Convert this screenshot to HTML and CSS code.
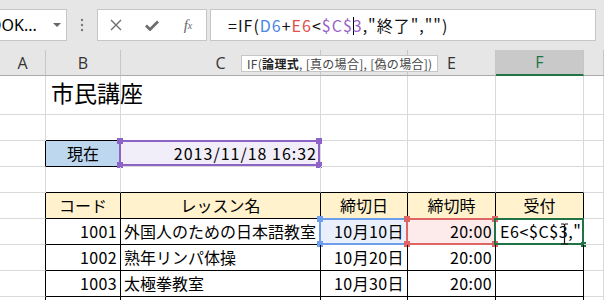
FILE: index.html
```html
<!DOCTYPE html>
<html lang="ja">
<head>
  <meta charset="UTF-8">
  <title>市民講座</title>
  <link rel="stylesheet" href="styles.css">
</head>
<body>
  <div class="toolbar">
    <div class="namebox">
      <span class="name">OOK...</span>
      <span class="drop"></span>
    </div>
    <div class="grip">
      <svg width="4" height="14" viewBox="0 0 4 14"><circle cx="2" cy="2" r="1.2"/><circle cx="2" cy="7" r="1.2"/><circle cx="2" cy="12" r="1.2"/></svg>
    </div>
    <div class="fbtns">
      <span class="fbtn"><svg width="12" height="12" viewBox="0 0 12 12"><path d="M1 1L11 11M11 1L1 11" stroke="#6e6e6e" stroke-width="1.4" fill="none"/></svg></span>
      <span class="fbtn"><svg width="14" height="11" viewBox="0 0 14 11"><path d="M1 5.5L5 9.5L13 1.5" stroke="#6e6e6e" stroke-width="2.8" fill="none"/></svg></span>
      <span class="fbtn fx">f<sub>x</sub></span>
    </div>
    <div class="formula">
      =IF(<span class="ref-b">D6</span>+<span class="ref-r">E6</span>&lt;<span class="ref-p">$C$</span><span class="caret"></span><span class="ref-p">3</span>,"終了","")
    </div>
  </div>

  <div class="sheet">
    <!-- column headers -->
    <div class="c h">A</div>
    <div class="c h">B</div>
    <div class="c h">C</div>
    <div class="c h">D</div>
    <div class="c h">E</div>
    <div class="c h active">F</div>
    <div class="c h"></div>

    <!-- row 1 -->
    <div class="c"></div>
    <div class="c title">市民講座</div>
    <div class="c"></div>
    <div class="c"></div>
    <div class="c"></div>
    <div class="c"></div>
    <div class="c"></div>

    <!-- row 2 -->
    <div class="c"></div>
    <div class="c above"></div>
    <div class="c"></div>
    <div class="c"></div>
    <div class="c"></div>
    <div class="c"></div>
    <div class="c"></div>

    <!-- row 3 -->
    <div class="c beside"></div>
    <div class="c tb label">現在</div>
    <div class="c right now">2013/11/18 16:32
      <div class="sel purple"><i class="k tl"></i><i class="k tr"></i><i class="k bl"></i><i class="k br"></i></div>
    </div>
    <div class="c"></div>
    <div class="c"></div>
    <div class="c"></div>
    <div class="c"></div>

    <!-- row 4 -->
    <div class="c"></div>
    <div class="c above"></div>
    <div class="c above"></div>
    <div class="c above"></div>
    <div class="c above"></div>
    <div class="c above"></div>
    <div class="c"></div>

    <!-- row 5 -->
    <div class="c beside"></div>
    <div class="c tb th">コード</div>
    <div class="c tb th">レッスン名</div>
    <div class="c tb th">締切日</div>
    <div class="c tb th">締切時</div>
    <div class="c tb th">受付</div>
    <div class="c"></div>

    <!-- row 6 -->
    <div class="c beside"></div>
    <div class="c tb right num">1001</div>
    <div class="c tb">外国人のための日本語教室</div>
    <div class="c tb right num blue-fill">10月10日
      <div class="sel blue"><i class="k tl"></i><i class="k tr"></i><i class="k bl"></i><i class="k br"></i></div>
    </div>
    <div class="c tb right num red-fill">20:00
      <div class="sel red"><i class="k tl"></i><i class="k tr"></i><i class="k bl"></i><i class="k br"></i></div>
    </div>
    <div class="c tb edit">E6&lt;$C$3,"
      <div class="sel green"><i class="k br"></i></div>
      <svg class="ibeam" width="9" height="22" viewBox="0 0 9 22"><path d="M1 1H3.5Q4.5 1 4.5 2V20Q4.5 21 5.5 21H8M8 1H5.5Q4.5 1 4.5 2M4.5 20Q4.5 21 3.5 21H1" stroke="#111" stroke-width="1.2" fill="none"/></svg>
    </div>
    <div class="c"></div>

    <!-- row 7 -->
    <div class="c beside"></div>
    <div class="c tb right num">1002</div>
    <div class="c tb">熟年リンパ体操</div>
    <div class="c tb right num">10月20日</div>
    <div class="c tb right num">20:00</div>
    <div class="c tb"></div>
    <div class="c"></div>

    <!-- row 8 -->
    <div class="c beside"></div>
    <div class="c tb right num">1003</div>
    <div class="c tb">太極拳教室</div>
    <div class="c tb right num">10月30日</div>
    <div class="c tb right num">20:00</div>
    <div class="c tb"></div>
    <div class="c"></div>

    <!-- row 9 -->
    <div class="c beside"></div>
    <div class="c tb"></div>
    <div class="c tb"></div>
    <div class="c tb"></div>
    <div class="c tb"></div>
    <div class="c tb"></div>
    <div class="c"></div>

    <div class="tip">IF(<b>論理式</b>, [真の場合], [偽の場合])</div>
  </div>
</body>
</html>
```

FILE: styles.css
```css
* {
  box-sizing: border-box;
}

body {
  margin: 0;
  width: 604px;
  height: 300px;
  overflow: hidden;
  background: #fff;
  font-family: "Noto Sans CJK JP", "Noto Sans", sans-serif;
  color: #000;
}

/* formula bar */
.toolbar {
  height: 50px;
  background: #e6e6e6;
  display: flex;
  align-items: flex-start;
  padding-top: 9px;
}

.namebox {
  margin-left: -14px;
  width: 81px;
  height: 32px;
  background: #fff;
  border: 1px solid #c6c6c6;
  display: flex;
  align-items: center;
  justify-content: space-between;
  padding: 0 5px 0 2px;
  font-family: "Noto Sans", sans-serif;
  font-size: 16px;
  overflow: hidden;
}

.drop {
  width: 0;
  height: 0;
  border-left: 4px solid transparent;
  border-right: 4px solid transparent;
  border-top: 4px solid #666;
}

.grip {
  width: 30px;
  height: 32px;
  display: flex;
  align-items: center;
  justify-content: center;
  fill: #777;
}

.fbtns {
  width: 110px;
  height: 32px;
  background: #fff;
  border: 1px solid #c6c6c6;
  display: flex;
}

.fbtn {
  width: 36px;
  display: flex;
  align-items: center;
  justify-content: center;
}

.fx {
  font-family: "Liberation Serif", serif;
  font-style: italic;
  font-size: 15px;
  color: #666;
}

.fx sub {
  font-size: 10px;
  vertical-align: -2px;
}

.formula {
  flex: 1;
  margin: 0 8px 0 3px;
  height: 32px;
  background: #fff;
  border: 1px solid #c6c6c6;
  padding-left: 17px;
  font-size: 16px;
  letter-spacing: 1px;
  line-height: 30px;
  white-space: nowrap;
  color: #111;
}

.ref-b { color: #4a86e8; }
.ref-r { color: #e0504a; }
.ref-p { color: #9b5fc8; }

.caret {
  display: inline-block;
  width: 1px;
  height: 18px;
  margin: 0 -1px 0 0;
  background: #000;
  vertical-align: -3px;
}

/* worksheet */
.sheet {
  position: relative;
  display: grid;
  grid-template-columns: 46px 75px 200px 87px 88px 88px 1fr;
  grid-template-rows: 26px 39px repeat(8, 26px);
}

.c {
  position: relative;
  border-right: 1px solid #d9d9d9;
  border-bottom: 1px solid #d9d9d9;
  font-size: 16px;
  line-height: 20px;
  padding: 0 3px 3px;
  display: flex;
  align-items: flex-end;
  white-space: nowrap;
}

.h {
  background: #e6e6e6;
  border-right-color: #c6c6c6;
  border-bottom-color: #ababab;
  justify-content: center;
  align-items: center;
  padding: 0;
  font-family: "Open Sans", sans-serif;
  color: #333;
}

.h.active {
  background: #c9c9c9;
  color: #217346;
  border-bottom: 2px solid #217346;
}

.title {
  font-size: 23px;
  line-height: 30px;
  padding: 0 5px 7px;
  overflow: visible;
}

.right {
  justify-content: flex-end;
}

.num {
  letter-spacing: 0.4px;
}

.above {
  border-bottom-color: #000;
}

.beside {
  border-right-color: #000;
}

.tb {
  border-right-color: #000;
  border-bottom-color: #000;
}

.label {
  background: #bdd7ee;
  justify-content: center;
}

.now {
  background: #f1edf9;
  letter-spacing: 1px;
}

.th {
  background: #fff2cc;
  justify-content: center;
}

.blue-fill { background: #eaf0fb; }
.red-fill { background: #fdeaea; }

.edit {
  overflow: visible;
  padding-left: 4px;
  letter-spacing: 0.6px;
}

/* range highlights */
.sel {
  position: absolute;
  top: -1px;
  right: -1px;
  bottom: -1px;
  left: -2px;
  border: 2px solid;
  pointer-events: none;
}

.purple { border-color: #8e63c8; top: -1px; right: 0; bottom: 0; }
.blue { border-color: #6d9eeb; }
.red { border-color: #e06666; }
.green { border-color: #217346; }

.k {
  position: absolute;
  width: 6px;
  height: 6px;
}

.purple .k { background: #8e63c8; }
.blue .k { background: #6d9eeb; }
.red .k { background: #e06666; }
.green .k { background: #217346; width: 5px; height: 5px; }

.k.tl { top: -4px; left: -4px; }
.k.tr { top: -4px; right: -4px; }
.k.bl { bottom: -4px; left: -4px; }
.k.br { bottom: -4px; right: -4px; }

.ibeam {
  position: absolute;
  left: 64px;
  top: 4px;
}

.tip {
  position: absolute;
  left: 241px;
  top: 5px;
  height: 17px;
  padding: 0 5px;
  background: #fff;
  border: 1px solid #c6c6c6;
  font-size: 12px;
  letter-spacing: 0.3px;
  line-height: 15px;
  color: #444;
  white-space: nowrap;
}

.tip b {
  font-weight: bold;
  color: #222;
}
```
